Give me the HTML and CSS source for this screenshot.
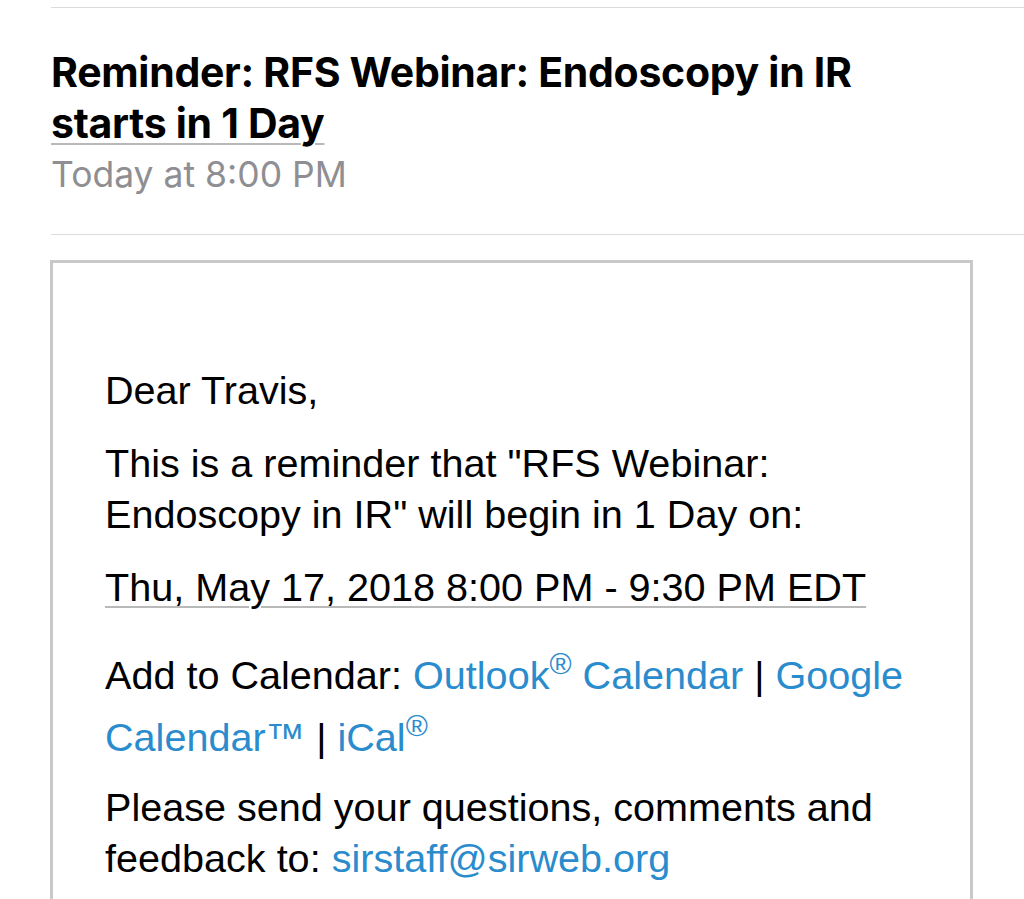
FILE: index.html
```html
<!DOCTYPE html>
<html lang="en">
<head>
    <meta charset="UTF-8">
    <meta name="viewport" content="width=device-width, initial-scale=1.0">
    <title>Reminder: RFS Webinar</title>
    <link rel="stylesheet" href="styles.css">
</head>
<body>
    <div class="mail">
        <div class="rule"></div>
        <header class="mail-head">
            <h1 class="subject">Reminder: RFS Webinar: Endoscopy in IR<br><span class="detected">starts in 1 Day</span></h1>
            <div class="sent">Today at 8:00 PM</div>
        </header>
        <div class="rule"></div>

        <div class="message">
            <p>Dear Travis,</p>
            <p>This is a reminder that "RFS Webinar: Endoscopy in IR" will begin in 1 Day on:</p>
            <p><span class="detected">Thu, May 17, 2018 8:00 PM - 9:30 PM EDT</span></p>
            <p class="calendar">Add to Calendar: <a href="#">Outlook<sup>&reg;</sup> Calendar</a> | <a href="#">Google Calendar&trade;</a> | <a href="#">iCal<sup>&reg;</sup></a></p>
            <p>Please send your questions, comments and feedback to: <a href="#">sirstaff@sirweb.org</a></p>
        </div>
    </div>
</body>
</html>
```

FILE: styles.css
```css
body {
    margin: 0;
    background-color: #ffffff;
    color: #000000;
    overflow: hidden;
}
.mail {
    padding: 7px 0 0 51px;
}
.rule {
    border-top: 1px solid #dcdcdc;
}
.mail-head {
    padding: 39px 0 0 0;
    height: 226px;
    box-sizing: border-box;
}
.subject {
    font-family: 'Inter', 'Noto Sans', sans-serif;
    font-weight: 700;
    font-size: 41px;
    line-height: 51px;
    margin: 0;
    letter-spacing: -0.3px;
}
.detected {
    text-decoration: underline;
    text-decoration-color: #b9b9b9;
    text-decoration-thickness: 2px;
    text-underline-offset: 5px;
}
.sent {
    font-family: 'Inter', 'Noto Sans', sans-serif;
    font-size: 35.5px;
    line-height: 51px;
    color: #8e8e93;
}
.message {
    margin: 25px 0 0 -1px;
    width: 923px;
    box-sizing: border-box;
    border: 3px solid #c9c9c9;
    border-bottom: none;
    padding: 80px 52px 40px 52px;
    font-family: 'Liberation Sans', Arial, sans-serif;
    font-size: 39.6px;
    line-height: 51px;
}
.message p {
    margin: 22px 0 0 0;
}
.message a {
    color: #2a8ccd;
    text-decoration: none;
}
sup {
    font-size: 30px;
    line-height: 0;
    vertical-align: 15px;
}
.message .calendar {
    margin-top: 31px;
    line-height: 62px;
}
.message .calendar + p {
    margin-top: 14px;
}
```
